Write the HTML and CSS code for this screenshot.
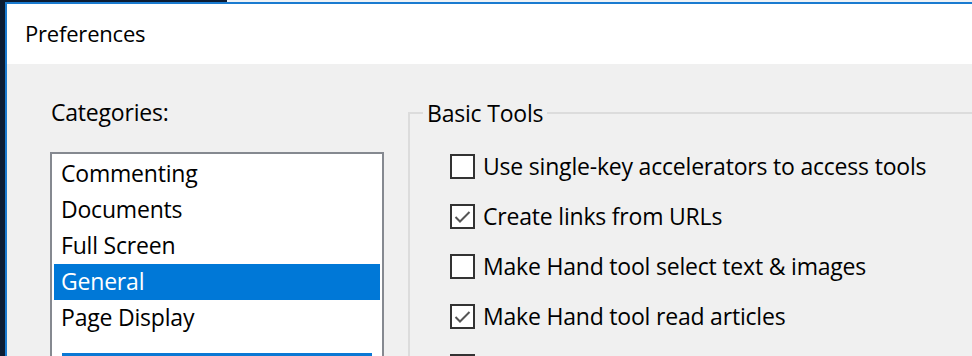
FILE: index.html
```html
<!DOCTYPE html>
<html lang="en">
<head>
  <meta charset="UTF-8" />
  <title>Preferences</title>
  <link rel="stylesheet" href="styles.css">
</head>
<body>

  <div class="window">
    <div class="titlebar">Preferences</div>

    <div class="content">
      <!-- Left: category list -->
      <div class="categories">
        <div class="cat-label">Categories:</div>
        <ul class="cat-list">
          <li>Commenting</li>
          <li>Documents</li>
          <li>Full Screen</li>
          <li class="selected">General</li>
          <li>Page Display</li>
          <li class="cat-more"></li>
        </ul>
      </div>

      <!-- Right: options -->
      <fieldset class="group">
        <legend>Basic Tools</legend>
        <label class="opt"><span class="box"></span>Use single-key accelerators to access tools</label>
        <label class="opt"><span class="box checked"><svg viewBox="0 0 21 21"><polyline points="3.5,11 8,15.5 17.5,6" /></svg></span>Create links from URLs</label>
        <label class="opt"><span class="box"></span>Make Hand tool select text &amp; images</label>
        <label class="opt"><span class="box checked"><svg viewBox="0 0 21 21"><polyline points="3.5,11 8,15.5 17.5,6" /></svg></span>Make Hand tool read articles</label>
        <label class="opt"><span class="box"></span></label>
      </fieldset>
    </div>
  </div>

</body>
</html>
```

FILE: styles.css
```css
html, body {
  margin: 0;
  height: 356px;
  overflow: hidden;
}
body {
  font-family: "Open Sans", "Noto Sans", sans-serif;
  font-size: 23px;
  letter-spacing: -0.2px;
  color: #000;
  background: linear-gradient(to right, #0c1c33 227px, #eef2f6 227px);
  padding: 2px 0 0 5px;
  box-sizing: border-box;
}
.window {
  border-left: 2px solid #1a7bd0;
  border-top: 2px solid #1a7bd0;
  background: #f0f0f0;
  height: 100%;
  box-sizing: border-box;
  overflow: hidden;
}
.titlebar {
  background: #fff;
  height: 60px;
  box-sizing: border-box;
  padding: 13px 0 0 18px;
  line-height: 32px;
  font-size: 22px;
}
.content {
  display: flex;
  align-items: flex-start;
  padding-left: 43px;
}
.categories {
  width: 334px;
  flex: none;
  padding-top: 32px;
}
.cat-label {
  line-height: 32px;
  padding-left: 1px;
}
.cat-list {
  list-style: none;
  margin: 24px 0 0 0;
  padding: 2px;
  background: #fff;
  border: 2px solid #858990;
  height: 260px;
}
.cat-list li {
  height: 36px;
  line-height: 35px;
  padding-left: 7px;
}
.cat-list li.selected {
  background: #0078d7;
  color: #fff;
}
.cat-list li.cat-more {
  margin: 17px 8px 0 8px;
  background: #0a78d4;
}
.group {
  flex: 1;
  margin: 33px -20px 0 24px;
  border: 2px solid #dcdcdc;
  padding: 12px 0 0 13px;
}
.group legend {
  padding: 0 4px;
  line-height: 32px;
}
.opt {
  display: flex;
  align-items: center;
  height: 50px;
  margin-left: 27px;
}
.box {
  width: 25px;
  height: 25px;
  box-sizing: border-box;
  border: 2px solid #333;
  background: #fff;
  margin-right: 8px;
  flex: none;
}
.box svg {
  display: block;
  width: 21px;
  height: 21px;
}
.box polyline {
  fill: none;
  stroke: #555;
  stroke-width: 2;
}
```
